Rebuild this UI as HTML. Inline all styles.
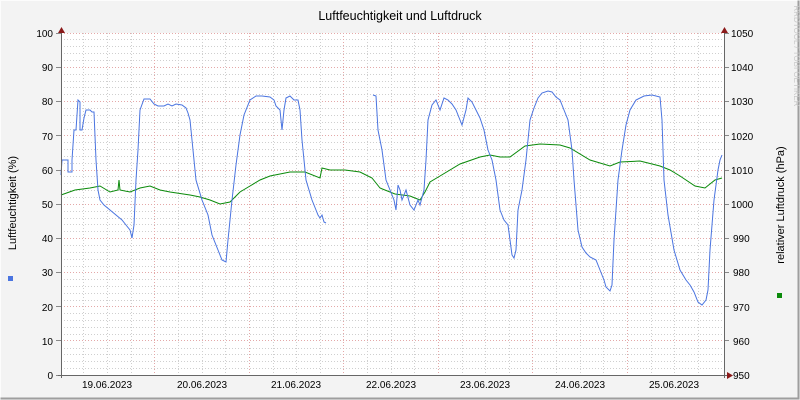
<!DOCTYPE html>
<html><head><meta charset="utf-8"><style>
html,body{margin:0;padding:0;background:#f3f3f3}
svg{display:block}
text{font-family:"Liberation Sans","DejaVu Sans",sans-serif;font-size:10px;fill:#000}
</style></head><body>
<svg width="800" height="400" viewBox="0 0 800 400" xmlns="http://www.w3.org/2000/svg">
<rect x="0" y="0" width="800" height="400" fill="#f3f3f3"/>
<path d="M0.5 399.5V0.5H799.5" stroke="#fcfcfc" fill="none"/>
<path d="M0.5 398.5H798.5V0.5" stroke="#9e9e9e" stroke-width="2" fill="none"/>
<rect x="61" y="33" width="663" height="342" fill="#fff"/>
<g stroke-width="1" fill="none">
<g stroke="#cfcfcf" stroke-dasharray="1,2">
<path d="M61 368.5H724M61 361.5H724M61 354.5H724M61 348.5H724M61 334.5H724M61 327.5H724M61 320.5H724M61 313.5H724M61 300.5H724M61 293.5H724M61 286.5H724M61 279.5H724M61 266.5H724M61 259.5H724M61 252.5H724M61 245.5H724M61 231.5H724M61 224.5H724M61 218.5H724M61 211.5H724M61 197.5H724M61 190.5H724M61 183.5H724M61 176.5H724M61 163.5H724M61 156.5H724M61 149.5H724M61 142.5H724M61 129.5H724M61 122.5H724M61 115.5H724M61 108.5H724M61 94.5H724M61 87.5H724M61 81.5H724M61 74.5H724M61 60.5H724M61 53.5H724M61 46.5H724M61 39.5H724"/>
<path d="M83.5 33V375M107.5 33V375M131.5 33V375M178.5 33V375M202.5 33V375M225.5 33V375M273.5 33V375M296.5 33V375M320.5 33V375M367.5 33V375M391.5 33V375M414.5 33V375M462.5 33V375M485.5 33V375M509.5 33V375M556.5 33V375M580.5 33V375M603.5 33V375M651.5 33V375M674.5 33V375M698.5 33V375"/>
</g>
<g stroke="#e4a8a8" stroke-dasharray="1,2">
<path d="M61 340.5H724M61 306.5H724M61 272.5H724M61 238.5H724M61 204.5H724M61 170.5H724M61 135.5H724M61 101.5H724M61 67.5H724M61 33.5H724"/>
<path d="M154.5 33V375M249.5 33V375M343.5 33V375M438.5 33V375M532.5 33V375M627.5 33V375"/>
</g>
</g>
<g stroke="#888" stroke-width="1">
<path d="M56 375.5H61M56 340.5H61M56 306.5H61M56 272.5H61M56 238.5H61M56 204.5H61M56 170.5H61M56 135.5H61M56 101.5H61M56 67.5H61M56 33.5H61"/>
<path d="M724 340.5H729M724 306.5H729M724 272.5H729M724 238.5H729M724 204.5H729M724 170.5H729M724 135.5H729M724 101.5H729M724 67.5H729M724 33.5H729"/>
</g>
<polyline fill="none" stroke="#0a8a0a" stroke-width="1" points="61,195 75,190 90,188 100,186 110,192 118,190 119,180 120,190 130,192 140,188 150,186 160,190 170,192 190,195 200,197 210,200 220,204 230,202 240,192 250,186 260,180 270,176 290,172 305,172 320,178 322,168 330,170 345,170 360,172 372,178 380,188 395,194 410,196 420,200 425,192 430,182 440,176 460,164 480,157 490,155 500,157 510,157 525,146 540,144 560,145 570,148 590,160 610,166 620,162 640,161 660,166 670,170 680,176 695,186 705,188 715,180 722,178"/>
<polyline fill="none" stroke="#4a74e0" stroke-width="1" points="61,175 62,160 68,160 68,172 72,172 72,160 74,130 76,130 78,100 80,102 80,130 82,130 84,118 86,110 90,110 92,112 94,112 96,160 98,190 100,200 104,205 110,210 116,215 122,220 126,225 130,230 132,238 134,225 136,180 138,150 140,110 144,99 150,99 154,104 158,106 164,106 168,104 172,106 176,104 182,105 186,108 188,113 190,120 192,140 196,180 202,200 208,215 212,235 218,250 222,260 226,262 228,240 232,200 236,165 240,135 244,115 250,100 256,96 262,96 270,97 274,100 276,106 280,110 282,130 284,110 286,98 290,96 294,100 298,100 300,110 302,140 306,180 312,200 316,210 318,215 320,218 322,215 324,222 326,223"/>
<polyline fill="none" stroke="#4a74e0" stroke-width="1" points="373,95 376,96 378,130 382,150 386,180 390,190 394,200 396,210 398,185 400,190 402,200 406,190 410,205 414,210 418,200 420,205 424,190 426,160 428,120 432,105 436,100 440,110 444,98 448,100 452,104 456,110 460,120 462,125 466,110 468,98 472,102 476,110 480,118 484,130 488,150 492,160 496,180 500,210 504,220 508,225 512,255 514,258 516,250 518,210 522,190 526,160 530,120 534,108 538,98 542,93 548,91 552,92 556,97 560,100 564,110 568,120 572,150 574,180 578,230 582,247 586,253 590,257 596,260 600,270 604,280 606,287 610,291 612,285 614,240 618,180 622,150 626,125 630,110 636,100 644,96 652,95 660,97 662,120 664,180 668,215 674,250 680,270 686,280 690,285 694,292 698,302 702,305 706,300 708,290 710,250 714,200 718,170 720,160 722,155"/>
<g stroke="#666" stroke-width="1">
<path d="M61.5 30V378M724.5 30V378M58 375.5H727"/>
</g>
<path d="M58 33L61.5 27L65 33Z M721 33L724.5 27L728 33Z M727 372L733 375.5L727 379Z" fill="#8b1a1a"/>
<g text-anchor="end">
<text x="53" y="379">0</text><text x="53" y="345">10</text><text x="53" y="311">20</text><text x="53" y="276">30</text><text x="53" y="242">40</text><text x="53" y="208">50</text><text x="53" y="174">60</text><text x="53" y="140">70</text><text x="53" y="105">80</text><text x="53" y="71">90</text><text x="53" y="37">100</text>
</g>
<g>
<text x="733" y="379">950</text><text x="733" y="345">960</text><text x="733" y="311">970</text><text x="733" y="276">980</text><text x="733" y="242">990</text><text x="731" y="208">1000</text><text x="731" y="174">1010</text><text x="731" y="140">1020</text><text x="731" y="105">1030</text><text x="731" y="71">1040</text><text x="731" y="37">1050</text>
</g>
<g text-anchor="middle" font-size="9.5">
<text x="107" y="388">19.06.2023</text><text x="202" y="388">20.06.2023</text><text x="296" y="388">21.06.2023</text><text x="391" y="388">22.06.2023</text><text x="485" y="388">23.06.2023</text><text x="580" y="388">24.06.2023</text><text x="674" y="388">25.06.2023</text>
</g>
<text x="400" y="20" text-anchor="middle" style="font-size:12.5px">Luftfeuchtigkeit und Luftdruck</text>
<text transform="translate(16,203) rotate(-90)" text-anchor="middle" style="font-size:11px">Luftfeuchtigkeit (%)</text>
<text transform="translate(784,205) rotate(-90)" text-anchor="middle" style="font-size:11px">relativer Luftdruck (hPa)</text>
<text transform="translate(794,56) rotate(90)" text-anchor="middle" style="font-size:8px;fill:#c8c8c8">RRDTOOL / TOBI OETIKER</text>
<rect x="8" y="276" width="5" height="5" fill="#4a74e0"/>
<rect x="777" y="293" width="5" height="5" fill="#0a8a0a"/>
</svg>
</body></html>
